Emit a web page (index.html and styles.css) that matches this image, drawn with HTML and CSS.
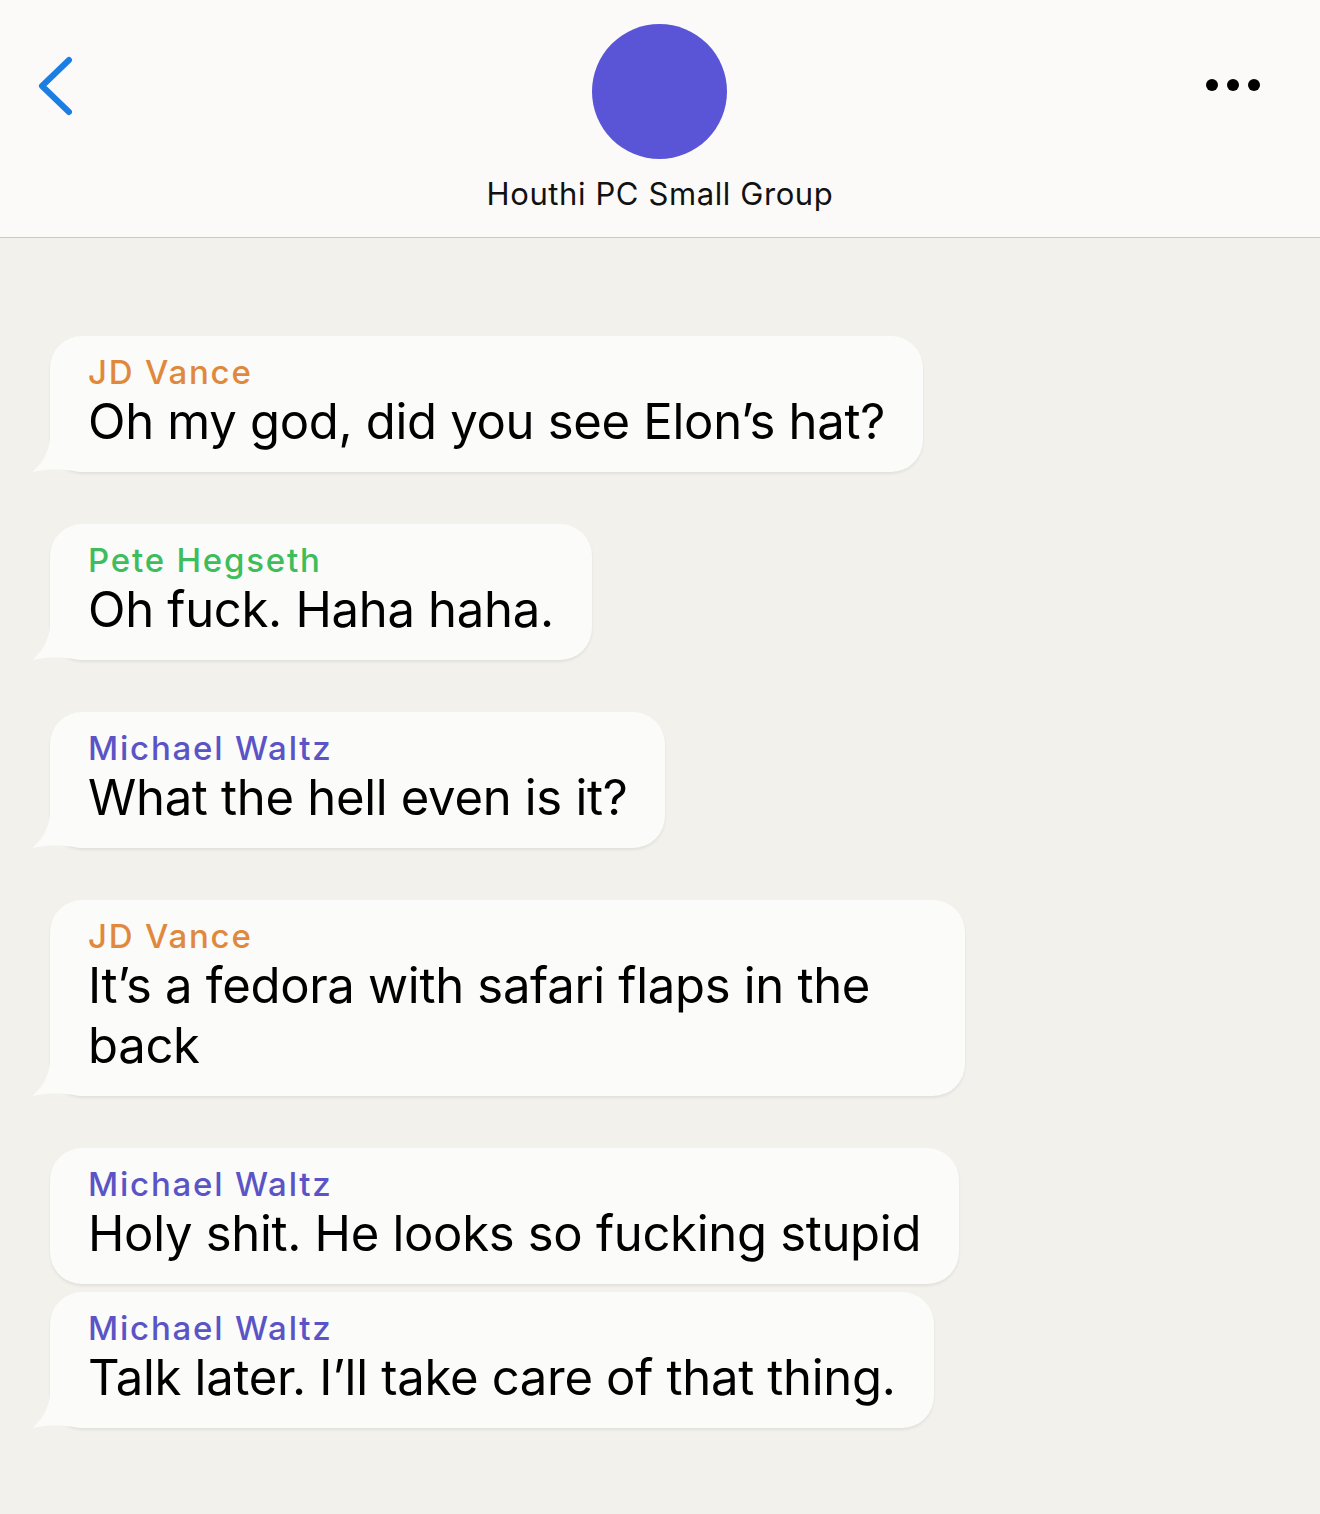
FILE: index.html
```html
<!DOCTYPE html>
<html lang="en">
<head>
    <meta charset="UTF-8">
    <meta name="viewport" content="width=device-width, initial-scale=1.0">
    <title>Houthi PC Small Group</title>
    <link rel="stylesheet" href="styles.css">
</head>
<body>
    <header class="topbar">
        <button class="back" aria-label="Back">
            <svg width="40" height="64" viewBox="0 0 40 64">
                <path d="M31 6 L4 32 L31 58" fill="none" stroke="#1a7ee3" stroke-width="6" stroke-linecap="round" stroke-linejoin="round"/>
            </svg>
        </button>

        <div class="group">
            <div class="avatar"></div>
            <div class="group-name">Houthi PC Small Group</div>
        </div>

        <button class="more" aria-label="More">
            <span></span><span></span><span></span>
        </button>
    </header>

    <main class="chat">
        <div class="msg tail">
            <div class="name orange">JD Vance</div>
            <div class="text">Oh my god, did you see Elon’s hat?</div>
        </div>

        <div class="msg tail">
            <div class="name green">Pete Hegseth</div>
            <div class="text">Oh fuck. Haha haha.</div>
        </div>

        <div class="msg tail">
            <div class="name purple">Michael Waltz</div>
            <div class="text">What the hell even is it?</div>
        </div>

        <div class="msg tail">
            <div class="name orange">JD Vance</div>
            <div class="text">It’s a fedora with safari flaps in the back</div>
        </div>

        <div class="run">
            <div class="msg">
                <div class="name purple">Michael Waltz</div>
                <div class="text">Holy shit. He looks so fucking stupid</div>
            </div>
            <div class="msg tail">
                <div class="name purple">Michael Waltz</div>
                <div class="text">Talk later. I’ll take care of that thing.</div>
            </div>
        </div>
    </main>
</body>
</html>
```

FILE: styles.css
```css
* {
    margin: 0;
    padding: 0;
    box-sizing: border-box;
}

body {
    font-family: Inter, "Open Sans", "Liberation Sans", sans-serif;
    background: #f3f1ec;
    color: #000;
    min-height: 100vh;
}

/* header */
.topbar {
    height: 238px;
    background: #fbfaf9;
    border-bottom: 1px solid #c9c8c6;
    display: grid;
    grid-template-columns: 1fr auto 1fr;
    align-items: start;
    padding: 0 60px 0 38px;
}

.topbar button {
    background: none;
    border: 0;
    padding: 0;
    cursor: pointer;
}

.back {
    margin-top: 54px;
    display: flex;
    justify-self: start;
}

.group {
    display: flex;
    flex-direction: column;
    align-items: center;
    padding-top: 24px;
    margin-left: 22px;
}

.avatar {
    width: 135px;
    height: 135px;
    border-radius: 50%;
    background: #5a55d6;
}

.group-name {
    margin-top: 16px;
    font-size: 31px;
    letter-spacing: 0.6px;
    color: #111;
}

.more {
    margin-top: 79px;
    display: flex;
    gap: 9px;
    justify-self: end;
}

.more span {
    width: 12px;
    height: 12px;
    border-radius: 50%;
    background: #000;
}

/* messages */
.chat {
    padding: 98px 0 60px 50px;
    display: flex;
    flex-direction: column;
    align-items: flex-start;
    gap: 52px;
}

.run {
    display: flex;
    flex-direction: column;
    align-items: flex-start;
    gap: 8px;
}

.msg {
    position: relative;
    max-width: 915px;
    background: #fbfbfa;
    border-radius: 32px;
    padding: 16px 38px 20px;
    box-shadow: 0 2px 3px rgba(0, 0, 0, 0.07);
}

.msg.tail::before {
    content: "";
    position: absolute;
    left: -18px;
    bottom: 0;
    width: 50px;
    height: 44px;
    background: #fbfbfa;
    clip-path: path("M18 0 C20 22 10 36 0 44 C10 42 22 40 34 42 L50 44 L50 0 Z");
}

.name {
    font-size: 33px;
    line-height: 40px;
    font-weight: 500;
    letter-spacing: 1.8px;
}

.text {
    font-size: 49px;
    line-height: 60px;
    letter-spacing: -0.3px;
}

.orange { color: #e0893d; }
.green  { color: #3dbd5c; }
.purple { color: #5b54c6; }
```
